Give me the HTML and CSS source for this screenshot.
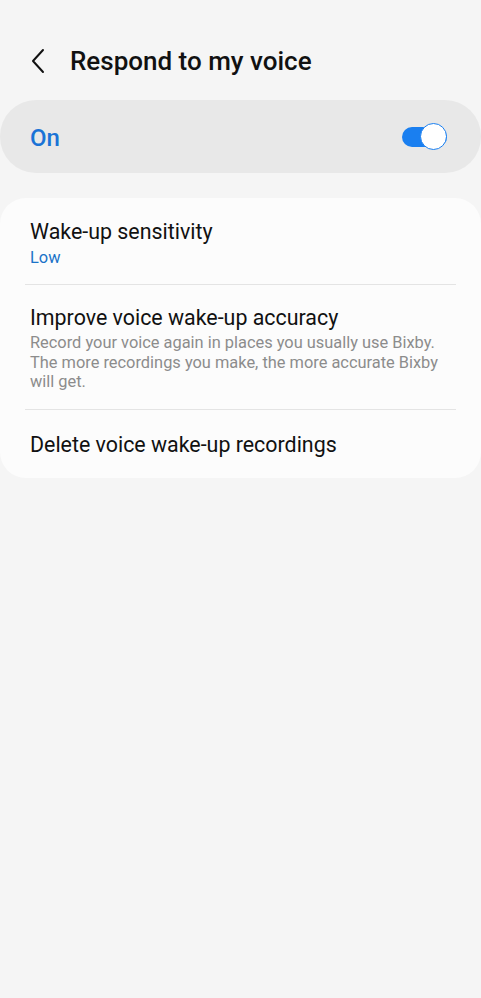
FILE: index.html
```html
<!DOCTYPE html>
<html>
<head>
<meta charset="utf-8">
<link rel="stylesheet" href="styles.css">
</head>
<body>
<div class="screen">
  <header class="appbar">
    <span class="back">
      <svg width="16" height="26" viewBox="0 0 16 26"><path d="M13 2 L3 13 L13 24" fill="none" stroke="#111" stroke-width="2" stroke-linecap="round" stroke-linejoin="round"/></svg>
    </span>
    <h1 class="title">Respond to my voice</h1>
  </header>
  <div class="master">
    <span class="master-label">On</span>
    <span class="switch"><span class="thumb"></span></span>
  </div>
  <div class="card">
    <div class="item item-first">
      <div class="item-title">Wake-up sensitivity</div>
      <div class="item-value">Low</div>
    </div>
    <div class="divider"></div>
    <div class="item">
      <div class="item-title">Improve voice wake-up accuracy</div>
      <div class="item-sub">Record your voice again in places you usually use Bixby. The more recordings you make, the more accurate Bixby will get.</div>
    </div>
    <div class="divider"></div>
    <div class="item item-single">
      <div class="item-title">Delete voice wake-up recordings</div>
    </div>
  </div>
</div>
</body>
</html>
```
FILE: styles.css
```css
html, body {
  margin: 0;
  padding: 0;
  background: #f5f5f5;
}
body {
  font-family: Roboto, "Noto Sans", sans-serif;
  color: #111;
  width: 481px;
  height: 998px;
  overflow: hidden;
}
.screen {
  display: flex;
  flex-direction: column;
}
.appbar {
  display: flex;
  align-items: center;
  height: 62px;
  padding-top: 30px;
  padding-left: 30px;
  box-sizing: content-box;
}
.back {
  display: flex;
  width: 40px;
}
.title {
  margin: 0;
  font-size: 26px;
  font-weight: 500;
  letter-spacing: 0;
}
.master {
  margin-top: 8px;
  height: 73px;
  border-radius: 36px;
  background: #e8e8e8;
  display: flex;
  align-items: center;
  justify-content: space-between;
  padding: 2px 34px 0 30px;
  box-sizing: border-box;
}
.master-label {
  font-size: 24px;
  font-weight: 500;
  color: #1a73d6;
}
.switch {
  position: relative;
  width: 45px;
  height: 20px;
  border-radius: 10px;
  background: #1a7ff0;
  margin-top: -2px;
}
.thumb {
  position: absolute;
  right: 0;
  top: -4px;
  width: 25px;
  height: 25px;
  border-radius: 50%;
  background: #fff;
  border: 1.5px solid #1a7ff0;
}
.card {
  margin-top: 25px;
  background: #fcfcfc;
  border-radius: 26px;
  padding: 0 25px;
  display: flex;
  flex-direction: column;
}
.item {
  padding: 19px 5px 17px;
}
.item-first {
  padding: 20px 5px 15px;
}
.item-single {
  padding: 21px 5px 19px;
}
.item-title {
  font-size: 21.4px;
  line-height: 28px;
  color: #111;
}
.item-value {
  font-size: 16.4px;
  line-height: 22px;
  color: #1a73c8;
  margin-top: 1px;
}
.item-sub {
  font-size: 16.4px;
  line-height: 19.5px;
  color: #8c8c8c;
  margin-top: 1px;
}
.divider {
  height: 1px;
  background: #e4e4e4;
}
```
